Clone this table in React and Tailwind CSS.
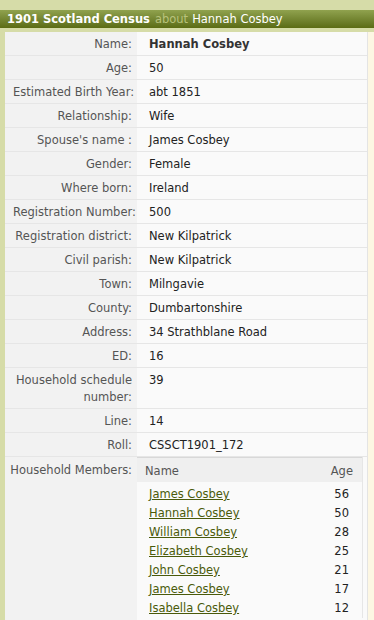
import React from 'react';

const rows = [
  ['Name:', 'Hannah Cosbey', true],
  ['Age:', '50'],
  ['Estimated Birth Year:', 'abt 1851'],
  ['Relationship:', 'Wife'],
  ["Spouse's name :", 'James Cosbey'],
  ['Gender:', 'Female'],
  ['Where born:', 'Ireland'],
  ['Registration Number:', '500'],
  ['Registration district:', 'New Kilpatrick'],
  ['Civil parish:', 'New Kilpatrick'],
  ['Town:', 'Milngavie'],
  ['County:', 'Dumbartonshire'],
  ['Address:', '34 Strathblane Road'],
  ['ED:', '16'],
  ['Household schedule number:', '39'],
  ['Line:', '14'],
  ['Roll:', 'CSSCT1901_172'],
];

const members = [
  ['James Cosbey', 56],
  ['Hannah Cosbey', 50],
  ['William Cosbey', 28],
  ['Elizabeth Cosbey', 25],
  ['John Cosbey', 21],
  ['James Cosbey', 17],
  ['Isabella Cosbey', 12],
];

export default function App() {
  return (
    <div className="w-[374px] h-[620px] overflow-hidden bg-[#d6dca8] text-[11.5px] leading-[17px] text-[#222]" style={{ fontFamily: '"DejaVu Sans", Verdana, sans-serif' }}>
      <div className="h-[10px]" />
      <div className="h-[18px] bg-gradient-to-b from-[#90a24e] to-[#5b6c13] flex items-center pl-[7px] text-[11.5px] text-white whitespace-nowrap">
        <span className="font-bold">1901 Scotland Census</span>
        <span className="ml-[5px] text-[#b8c27c]">about</span>
        <span className="ml-[4px]">Hannah Cosbey</span>
      </div>
      <div className="h-[4px]" />
      <div className="flex">
        <div className="w-[5px] shrink-0" />
        <div className="w-[363px] shrink-0 bg-[#fafafa] border-r border-[#e4e4e4]">
          {rows.map(([label, value, bold]) => (
            <div key={label} className="flex border-b border-[#e6e6e6]">
              <div className="w-[132px] shrink-0 bg-[#f2f2f2] text-right pr-[5px] pl-[8px] pt-[4px] pb-[2px] text-[#555] whitespace-nowrap">
                {label === 'Household schedule number:' ? (<>Household schedule<br />number:</>) : label}
              </div>
              <div className={`flex-1 pl-[12px] pt-[4px] pb-[2px] ${bold ? 'font-bold text-[#333]' : 'text-[#222]'}`}>{value}</div>
            </div>
          ))}
          <div className="flex border-b border-[#e6e6e6]">
            <div className="w-[132px] shrink-0 bg-[#f2f2f2] text-right pr-[5px] pt-[5px] text-[#555] whitespace-nowrap">Household Members:</div>
            <div className="flex-1 pb-[4px]">
              <div className="w-[226px] border-r border-[#e6e6e6]">
                <div className="flex justify-between bg-[#efefef] border-t border-[#d8d8d8] pl-[8px] pr-[9px] pt-[5px] pb-[2px] text-[#555]">
                  <span>Name</span>
                  <span>Age</span>
                </div>
                <div className="pt-[3px]">
                  {members.map(([n, a], i) => (
                    <div key={i} className="flex justify-between pl-[12px] pr-[13px] h-[19px] items-center">
                      <a href="#" className="text-[#4a5a0a] underline">{n}</a>
                      <span className="text-[#222]">{a}</span>
                    </div>
                  ))}
                </div>
              </div>
            </div>
          </div>
        </div>
        <div className="flex-1 bg-[#fdf7e3]" />
      </div>
    </div>
  );
}
